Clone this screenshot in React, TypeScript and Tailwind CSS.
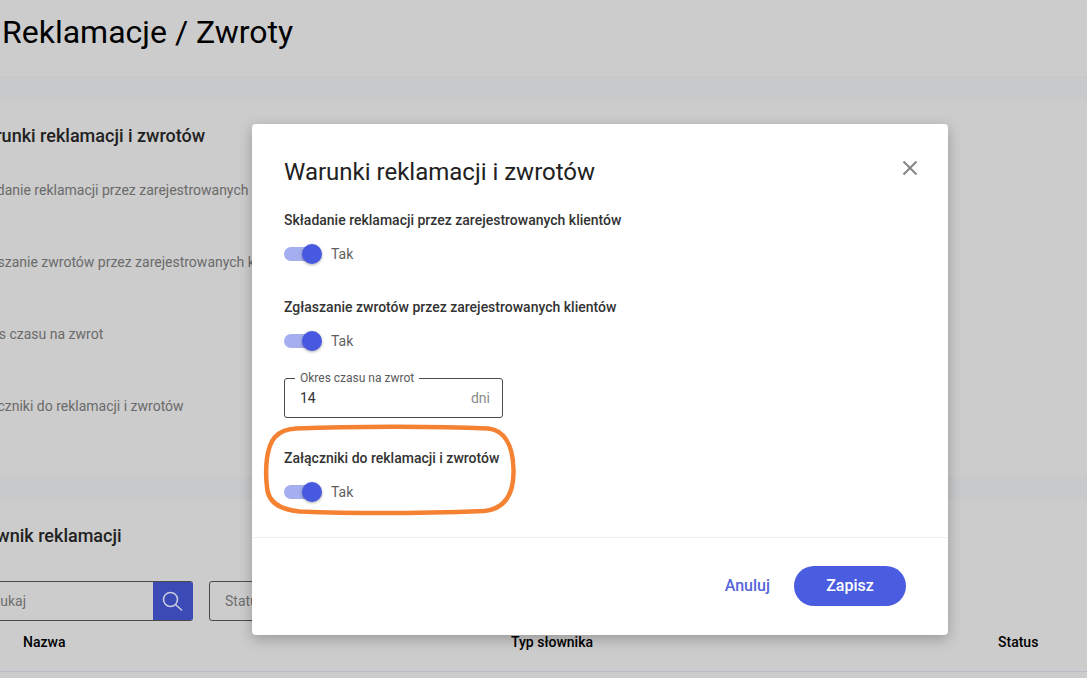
import React from "react";

function Toggle() {
  return (
    <div className="flex items-center h-[20px]">
      <div className="relative w-[38px] h-[20px] flex items-center">
        <div className="w-[34px] h-[14px] rounded-full bg-[#a5aeee]" />
        <div className="absolute left-[18px] top-0 w-[20px] h-[20px] rounded-full bg-[#4659e0] shadow-[0_1px_3px_rgba(0,0,0,0.35)]" />
      </div>
      <span className="ml-[9px] text-[14px] leading-[20px] text-[#5f5f5f]">Tak</span>
    </div>
  );
}

function BgRow({ children, mt }: { children: React.ReactNode; mt: string }) {
  return <div className={`${mt} text-[14px] leading-[20px] text-[#6a6a6a] whitespace-nowrap`}>{children}</div>;
}

export default function App() {
  return (
    <div className="relative w-[1087px] h-[678px] overflow-hidden bg-[#cccccc] font-['Roboto',sans-serif]">
      <header className="h-[77px] border-b border-[#c6c6c6] pl-[2px] pt-[13px]">
        <h1 className="text-[32px] leading-[38px] text-black">Reklamacje / Zwroty</h1>
      </header>
      <div className="h-[24px] bg-[#c8c9ca]" />
      <section className="h-[376px] -ml-[30px] pt-[24px]">
        <h2 className="text-[18px] leading-[22px] font-medium text-[#212121] whitespace-nowrap">Warunki reklamacji i zwrotów</h2>
        <BgRow mt="mt-[33px]">Składanie reklamacji przez zarejestrowanych klientów</BgRow>
        <BgRow mt="mt-[52px]">Zgłaszanie zwrotów przez zarejestrowanych klientów</BgRow>
        <BgRow mt="mt-[52px]">Okres czasu na zwrot</BgRow>
        <BgRow mt="mt-[52px]">Załączniki do reklamacji i zwrotów</BgRow>
      </section>
      <div className="h-[24px] bg-[#c8c9ca]" />
      <section className="h-[177px] relative">
        <div className="pt-[24px] -ml-[30px]">
          <h2 className="text-[18px] leading-[22px] font-medium text-[#212121] whitespace-nowrap">Słownik reklamacji</h2>
        </div>
        <div className="mt-[34px] flex items-start">
          <div className="-ml-[20px] w-[213px] h-[40px] flex rounded-[3px] border-y border-l border-[#4a4a4a] overflow-hidden">
            <div className="w-[172px] pl-[4px] text-[14px] leading-[38px] text-[#6f6f6f] overflow-hidden">Szukaj</div>
            <div className="w-[40px] -my-px bg-[#3c4ab5] flex items-center justify-center">
              <svg width="24" height="24" viewBox="0 0 24 24" fill="none" stroke="#c9cbe0" strokeWidth="1.6">
                <circle cx="9.5" cy="10.5" r="7" />
                <path d="M14.5 15.5 L21 21.5" />
              </svg>
            </div>
          </div>
          <div className="ml-[16px] w-[200px] h-[40px] rounded-[3px] border border-[#4a4a4a] pl-[15px] text-[14px] leading-[38px] text-[#6f6f6f]">Status</div>
        </div>
        <div className="h-[51px] border-b border-[#bcbcc8] text-[14px] font-medium text-black relative">
          <div className="flex items-center h-[42px]">
            <span className="ml-[23px] w-[488px]">Nazwa</span>
            <span className="w-[487px]">Typ słownika</span>
            <span>Status</span>
          </div>
        </div>
      </section>

      <div className="absolute left-[252px] top-[124px] w-[696px] h-[511px] bg-white rounded-[4px] shadow-[0_4px_14px_rgba(0,0,0,0.25)] flex flex-col">
        <div className="h-[413px] pl-[32px] pr-[29px] relative">
          <h2 className="pt-[33px] text-[24px] leading-[30px] text-[#212121]">Warunki reklamacji i zwrotów</h2>
          <button className="absolute right-[28px] top-[34px] w-[20px] h-[20px] flex items-center justify-center">
            <svg width="20" height="20" viewBox="0 0 20 20" fill="none" stroke="#858585" strokeWidth="2">
              <path d="M3.5 3.5 L16.5 16.5 M16.5 3.5 L3.5 16.5" />
            </svg>
          </button>
          <p className="mt-[23px] text-[14px] leading-[20px] font-medium text-[#333333]">Składanie reklamacji przez zarejestrowanych klientów</p>
          <div className="mt-[14px]"><Toggle /></div>
          <p className="mt-[33px] text-[14px] leading-[20px] font-medium text-[#333333]">Zgłaszanie zwrotów przez zarejestrowanych klientów</p>
          <div className="mt-[14px]"><Toggle /></div>
          <div className="relative mt-[27px] w-[219px] h-[40px] rounded-[3px] border border-[#4a4a4a] flex items-center justify-between pl-[15px] pr-[12px]">
            <span className="absolute left-[10px] -top-[8px] bg-white px-[5px] text-[12px] leading-[14px] text-[#5a5a5a]">Okres czasu na zwrot</span>
            <span className="text-[14px] text-[#333333]">14</span>
            <span className="text-[14px] text-[#8a8a8a]">dni</span>
          </div>
          <p className="mt-[30px] text-[14px] leading-[20px] font-medium text-[#333333]">Załączniki do reklamacji i zwrotów</p>
          <div className="mt-[14px]"><Toggle /></div>
        </div>
        <div className="border-t border-[#eeeeee] flex-1 flex items-start justify-end pt-[28px] pr-[42px]">
          <button className="h-[40px] mr-[24px] text-[16px] font-medium text-[#5766d8]">Anuluj</button>
          <button className="w-[112px] h-[40px] rounded-full bg-[#4a5ce0] text-[16px] font-medium text-white">Zapisz</button>
        </div>
      </div>

      <svg className="absolute left-0 top-0 pointer-events-none" width="1087" height="678" fill="none">
        <path
          d="M296 428.5 C360 426 440 426.5 488 428.5 C503 430 513 443 513.5 470 C514 496 503 509 484 511 C420 513.5 350 513.5 300 511.5 C282 510 268 503 267 487 C265 470 266 447 275 437 C280 431.5 288 429 296 428.5 Z"
          stroke="#f58232"
          strokeWidth="4.5"
        />
      </svg>
    </div>
  );
}
